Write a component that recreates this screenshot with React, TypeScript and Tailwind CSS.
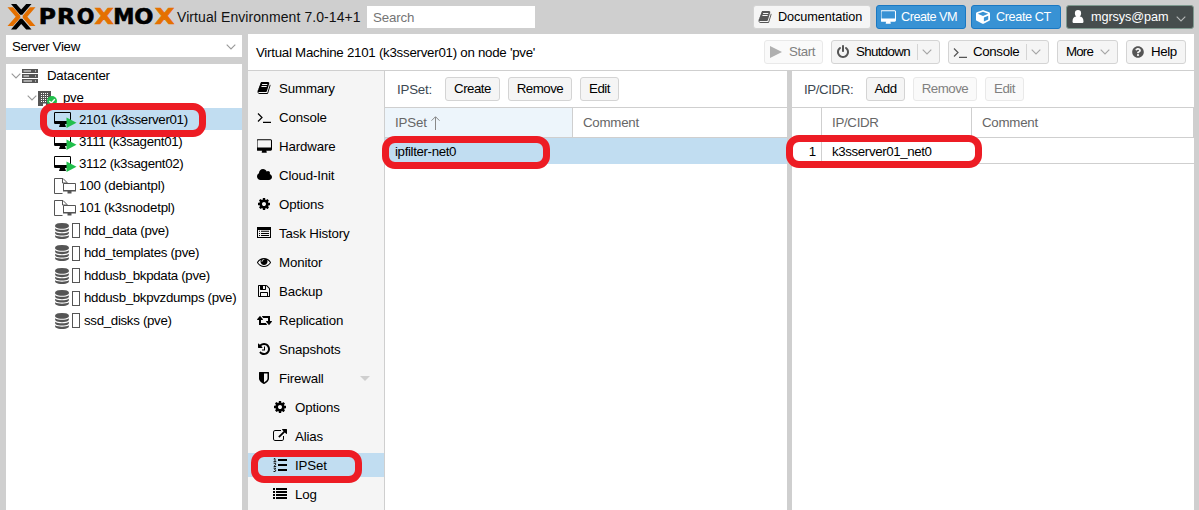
import React from "react";
import { FaCube, FaQuestionCircle } from "react-icons/fa";

const P = {
  book: "M1703 478q40 57 18 129l-275 906q-19 64-76.5 107.5t-122.5 43.5h-923q-77 0-148.5-53.5t-99.5-131.5q-24-67-2-127 0-4 3-27t4-37q1-8-3-21.5t-3-19.5q2-11 8-21t16.5-23.5 16.5-23.5q23-38 45-91.5t30-91.5q3-10 .5-30t-.5-28q3-11 17-28t17-23q21-36 42-92t25-90q1-9-2.5-32t.5-28q4-13 22-30.5t22-22.5q19-26 42.5-84.5t27.5-96.5q1-8-3-25.5t-2-26.5q2-8 9-18t18-23 17-21q8-12 16.5-30.5t15-35 16-36 19.5-32 26.5-23.5 36-11.5 47.5 5.5l-1 3q38-9 51-9h761q74 0 114 56t18 130l-274 906q-36 119-71.5 153.5t-128.5 34.5h-869q-27 0-38 15-11 16-1 43 24 70 144 70h923q29 0 56-15.5t35-41.5l300-987q7-22 5-57 38 15 59 43zm-1064 2q-4 13 2 22.5t20 9.5h608q13 0 25.5-9.5t16.5-22.5l21-64q4-13-2-22.5t-20-9.5h-608q-13 0-25.5 9.5t-16.5 22.5zm-83 256q-4 13 2 22.5t20 9.5h608q13 0 25.5-9.5t16.5-22.5l21-64q4-13-2-22.5t-20-9.5h-608q-13 0-25.5 9.5t-16.5 22.5z",
  desktop: "M1728 992v-832q0-13-9.5-22.5t-22.5-9.5h-1600q-13 0-22.5 9.5t-9.5 22.5v832q0 13 9.5 22.5t22.5 9.5h1600q13 0 22.5-9.5t9.5-22.5zm128-832v1088q0 66-47 113t-113 47h-544q0 37 16 77.5t32 71 16 43.5q0 26-19 45t-45 19h-512q-26 0-45-19t-19-45q0-14 16-44t32-70 16-78h-544q-66 0-113-47t-47-113v-1088q0-66 47-113t113-47h1600q66 0 113 47t47 113z",
  cloud: "M1920 1152q0 159-112.5 271.5t-271.5 112.5h-1088q-185 0-316.5-131.5t-131.5-316.5q0-132 71-241.5t187-163.5q-2-28-2-43 0-212 150-362t362-150q158 0 286.5 88t187.5 230q70-62 166-62 106 0 181 75t75 181q0 75-41 138 129 30 213 134.5t84 239.5z",
  cog: "M1152 896q0-106-75-181t-181-75-181 75-75 181 75 181 181 75 181-75 75-181zm512-109v222q0 12-8 23t-20 13l-185 28q-19 54-39 91 35 50 107 138 10 12 10 25t-9 23q-27 37-99 108t-94 71q-12 0-26-9l-138-108q-44 23-91 38-16 136-29 186-7 28-36 28h-222q-14 0-24.5-8.5t-11.5-21.5l-28-184q-49-16-90-37l-141 107q-10 9-25 9-14 0-25-11-126-114-165-168-7-10-7-23 0-12 8-23 15-21 51-66.5t54-70.5q-27-50-41-99l-183-27q-13-2-21-12.5t-8-23.5v-222q0-12 8-23t19-13l186-28q14-46 39-92-40-57-107-138-10-12-10-24 0-10 9-23 26-36 98.5-107.5t94.5-71.5q13 0 26 10l138 107q44-23 91-38 16-136 29-186 7-28 36-28h222q14 0 24.5 8.5t11.5 21.5l28 184q49 16 90 37l142-107q9-9 24-9 13 0 25 10 129 119 165 170 7 8 7 22 0 12-8 23-15 21-51 66.5t-54 70.5q26 50 41 98l183 28q13 2 21 12.5t8 23.5z",
  listAlt: "M0 128h1792v1408h-1792zM128 512v896h1536v-896zM256 600h128v128h-128zM512 600h1024v128h-1024zM256 880h128v128h-128zM512 880h1024v128h-1024zM256 1160h128v128h-128zM512 1160h1024v128h-1024z",
  eye: "M1664 960q-152-236-381-353 61 104 61 225 0 185-131.5 316.5t-316.5 131.5-316.5-131.5-131.5-316.5q0-121 61-225-229 117-381 353 133 205 333.5 326.5t434.5 121.5 434.5-121.5 333.5-326.5zm-720-384q0-20-14-34t-34-14q-125 0-214.5 89.5t-89.5 214.5q0 20 14 34t34 14 34-14 14-34q0-86 61-147t147-61q20 0 34-14t14-34zm848 384q0 34-20 69-140 230-376.5 368.5t-499.5 138.5-499.5-139-376.5-368q-20-35-20-69t20-69q140-229 376.5-368t499.5-139 499.5 139 376.5 368q20 35 20 69z",
  floppy: "M512 1536h768v-384h-768v384zm896 0h128v-896q0-14-10-38.5t-20-34.5l-281-281q-10-10-34-20t-39-10v416q0 40-28 68t-68 28h-576q-40 0-68-28t-28-68v-416h-128v1280h128v-416q0-40 28-68t68-28h832q40 0 68 28t28 68v416zm-384-928v-320q0-13-9.5-22.5t-22.5-9.5h-192q-13 0-22.5 9.5t-9.5 22.5v320q0 13 9.5 22.5t22.5 9.5h192q13 0 22.5-9.5t9.5-22.5zm640 32v928q0 40-28 68t-68 28h-1344q-40 0-68-28t-28-68v-1344q0-40 28-68t68-28h928q40 0 88 20t76 48l280 280q28 28 48 76t20 88z",
  retweet: "M1344 1504q0 13-9.5 22.5t-22.5 9.5h-960q-8 0-13.5-2t-9-7-5.5-8-3-11.5-1-11.5v-600h-192q-26 0-45-19t-19-45q0-24 15-41l320-384q19-22 49-22t49 22l320 384q15 17 15 41 0 26-19 45t-45 19h-192v384h576q16 0 25 11l160 192q7 10 7 21zm640-416q0 24-15 41l-320 384q-20 23-49 23t-49-23l-320-384q-15-17-15-41 0-26 19-45t45-19h192v-384h-576q-16 0-25-12l-160-192q-7-9-7-20 0-13 9.5-22.5t22.5-9.5h960q8 0 13.5 2t9 7 5.5 8 3 11.5 1 11.5v600h192q26 0 45 19t19 45z",
  history: "M1664 896q0 156-61 298t-164 245-245 164-298 61q-172 0-327-72.5t-264-204.5q-7-10-6.5-22.5t8.5-20.5l137-138q10-9 25-9 16 2 23 12 73 95 179 147t225 52q104 0 198.5-40.5t163.5-109.5 109.5-163.5 40.5-198.5-40.5-198.5-109.5-163.5-163.5-109.5-198.5-40.5q-98 0-188 35.5t-160 101.5l137 138q31 30 14 69-17 40-59 40h-448q-26 0-45-19t-19-45v-448q0-42 40-59 39-17 69 14l130 129q107-101 244.5-156.5t284.5-55.5q156 0 298 61t245 164 164 245 61 298zm-640-288v448q0 14-9 23t-23 9h-320q-14 0-23-9t-9-23v-64q0-14 9-23t23-9h224v-352q0-14 9-23t23-9h64q14 0 23 9t9 23z",
  shield: "M1344 960v-640h-448v1137q119-63 213-137 235-184 235-360zm192-768v768q0 86-33.5 170.5t-83 150-118 127.5-126.5 103-121 77.5-89.5 49.5-42.5 20q-12 6-26 6t-26-6q-16-7-42.5-20t-89.5-49.5-121-77.5-126.5-103-118-127.5-83-150-33.5-170.5v-768q0-26 19-45t45-19h1152q26 0 45 19t19 45z",
  external: "M1408 928v320q0 119-84.5 203.5t-203.5 84.5h-832q-119 0-203.5-84.5t-84.5-203.5v-832q0-119 84.5-203.5t203.5-84.5h704q14 0 23 9t9 23v64q0 14-9 23t-23 9h-704q-66 0-113 47t-47 113v832q0 66 47 113t113 47h832q66 0 113-47t47-113v-320q0-14 9-23t23-9h64q14 0 23 9t9 23zm384-864v512q0 26-19 45t-45 19-45-19l-176-176-652 652q-10 10-23 10t-23-10l-114-114q-10-10-10-23t10-23l652-652-176-176q-19-19-19-45t19-45 45-19h512q26 0 45 19t19 45z",
  database: "M896 768q237 0 443-43t325-127v170q0 69-103 128t-280 93.5-385 34.5-385-34.5-280-93.5-103-128v-170q119 84 325 127t443 43zm0 768q237 0 443-43t325-127v170q0 69-103 128t-280 93.5-385 34.5-385-34.5-280-93.5-103-128v-170q119 84 325 127t443 43zm0-384q237 0 443-43t325-127v170q0 69-103 128t-280 93.5-385 34.5-385-34.5-280-93.5-103-128v-170q119 84 325 127t443 43zm0-1152q208 0 385 34.5t280 93.5 103 128v128q0 69-103 128t-280 93.5-385 34.5-385-34.5-280-93.5-103-128v-128q0-69 103-128t280-93.5 385-34.5z",
  power: "M1664 896q0 156-61 298t-164 245-245 164-298 61-298-61-245-164-164-245-61-298q0-182 80.5-343t226.5-270q43-32 95.5-25t83.5 50q32 42 24.5 94.5t-49.5 84.5q-98 74-151.5 181t-53.5 228q0 104 40.5 198.5t109.5 163.5 163.5 109.5 198.5 40.5 198.5-40.5 163.5-109.5 109.5-163.5 40.5-198.5q0-121-53.5-228t-151.5-181q-42-32-49.5-84.5t24.5-94.5q31-43 84-50t95 25q146 109 226.5 270t80.5 343zm-640-768v640q0 52-38 90t-90 38-90-38-38-90v-640q0-52 38-90t90-38 90 38 38 90z",
  list: "M0 128h256v256h-256zM384 128h1408v256h-1408zM0 512h256v256h-256zM384 512h1408v256h-1408zM0 896h256v256h-256zM384 896h1408v256h-1408zM0 1280h256v256h-256zM384 1280h1408v256h-1408z",
  user: "M896 0a400 400 0 0 1 400 400c0 170-70 330-190 420c300 0 494 200 494 640c0 130-90 204-200 204h-1008c-110 0-200-74-200-204c0-440 194-640 494-640c-120-90-190-250-190-420a400 400 0 0 1 400-400z",
};

function Icon({ d, box = "0 0 1792 1792", className = "size-[14px]" }: { d: string; box?: string; className?: string }) {
  return (
    <svg viewBox={box} className={`shrink-0 ${className}`} fill="currentColor" fillRule="evenodd">
      <path d={d} />
    </svg>
  );
}

const Terminal = () => (
  <svg viewBox="0 0 14 12" className="mt-px h-3 w-3.5 shrink-0" fill="none" stroke="currentColor" strokeWidth="1.2">
    <path d="M1 1.5L5 5.5L1 9.5M6 10.4H14" />
  </svg>
);

const NumList = () => (
  <svg viewBox="0 0 14 14" className="size-[14px] shrink-0" fill="none" stroke="currentColor">
    <path d="M5 2H14M5 7H14M5 12H14" strokeWidth="2" />
    <path d="M.7 1L2 .5V3.6M.5 3.7H3.3M.7 5.3H2.6V6.8L.8 8.5H3.2M.6 10.2H2.7L1.6 11.5L2.8 12.2L2.2 13.5H.5" strokeWidth=".9" />
  </svg>
);

const Chevron = ({ className = "text-[#a5a5a5]" }: { className?: string }) => (
  <svg viewBox="0 0 10 6" className={`h-1.5 w-2.5 shrink-0 ${className}`} fill="none" stroke="currentColor" strokeWidth="1.1">
    <path d="M.7 .7L5 5L9.3 .7" />
  </svg>
);

const Logo = () => (
  <svg viewBox="0 0 170 28" className="h-7 w-[170px] shrink-0" fontFamily="DejaVu Sans" fontWeight="bold" fontSize="20.6">
    <path d="M4 1H9.300L14.200 6.600L19.200 1H24.500L15.300 11.800H13.100zM4 26.500H9.300L14.200 20.900L19.200 26.500H24.500L15.300 15.700H13.100z" />
    <path fill="#e57000" d="M.2 4.300H5.800L13 12.700V14.700L5.800 23H.2L8.400 13.700zM28.200 4.300H22.600L15.400 12.700V14.700L22.600 23H28.200L20 13.700z" transform="translate(.3 0)" />
    <g stroke="#000" strokeWidth=".6">
      <text x="31.700" y="21.200" textLength="17" lengthAdjust="spacingAndGlyphs">P</text>
      <text x="50" y="21.200" textLength="18" lengthAdjust="spacingAndGlyphs">R</text>
      <text x="69.700" y="21.200" textLength="17.500" lengthAdjust="spacingAndGlyphs">O</text>
      <text x="106.300" y="21.200" textLength="21" lengthAdjust="spacingAndGlyphs">M</text>
      <text x="127.300" y="21.200" textLength="19" lengthAdjust="spacingAndGlyphs">O</text>
    </g>
    <g fill="#e57000" stroke="#e57000" strokeWidth=".6">
      <text x="87.500" y="21.200" textLength="19" lengthAdjust="spacingAndGlyphs">X</text>
      <text x="147.700" y="21.200" textLength="19.500" lengthAdjust="spacingAndGlyphs">X</text>
    </g>
  </svg>
);

const ServerIcon = () => (
  <svg viewBox="0 0 16 14" className="h-3.5 w-4 shrink-0">
    <path fill="#555" d="M0 0h16v4H0zM0 5h16v4H0zM0 10h16v4H0z" />
    <path stroke="#fff" d="M1.500 2H9M1.500 7H7M1.500 12H10M13 2h1M13 7h1M13 12h1" />
  </svg>
);

const NodeIcon = () => (
  <svg viewBox="0 0 19 15" className="h-[15px] w-[19px] shrink-0">
    <path fill="#555" d="M0 0h13v15H0z" />
    <path stroke="#fff" strokeDasharray="1 1" d="M3 2.500h8M3 4.500h8M3 6.500h8M3 8.500h8M3 10.500h8" />
    <path fill="#fff" d="M5 12.500h3V15H5z" />
    <circle cx="14" cy="10" r="5" fill="#21bf4b" />
    <path d="M11.300 10l2 2 3.500-3.800" fill="none" stroke="#fff" strokeWidth="1.4" />
  </svg>
);

const VmIcon = () => (
  <svg viewBox="0 0 23 16" className="h-4 w-[23px] shrink-0">
    <path fillRule="evenodd" d="M1.200 0h14.600Q17 0 17 1.200v9.600Q17 12 15.800 12H11l1 3H5l1-3H1.200Q0 12 0 10.800V1.200Q0 0 1.200 0zM1 1v8h15V1z" />
    <path d="M12.500 5.500L22.500 10.700L12.500 16z" fill="#21bf4b" />
  </svg>
);

const TemplateIcon = () => (
  <svg viewBox="0 0 23 16" className="h-4 w-[23px] shrink-0" fill="none" stroke="#555">
    <path d="M13 5V4.500L9 .5H.5V15.500H8.500M8.500 .5V5H13" />
    <path d="M9.500 5.500H21.500V12.500H9.500z" fill="#fff" />
    <path d="M9 12h13v1.500H9zM13.500 13.500h4v2h-4z" fill="#555" stroke="none" />
  </svg>
);

const StorageIcon = () => (
  <span className="mr-1 flex items-center gap-[3px] text-[#555]">
    <Icon d={P.database} box="128 0 1536 1792" className="h-4 w-3.5" />
    <span className="h-[15px] w-2 border border-[#555]" />
  </span>
);

const btn = "flex h-6 shrink-0 items-center rounded-[3px] border ";
const normal = "border-[#d4d4d4] bg-[#f5f5f5] text-black ";
const disabled = "border-[#e9e9e9] bg-[#fafafa] text-[#808080] ";

const vms = ["2101 (k3sserver01)", "3111 (k3sagent01)", "3112 (k3sagent02)"];
const templates = ["100 (debiantpl)", "101 (k3snodetpl)"];
const storages = ["hdd_data (pve)", "hdd_templates (pve)", "hddusb_bkpdata (pve)", "hddusb_bkpvzdumps (pve)", "ssd_disks (pve)"];

const menu: { label: string; icon: React.ReactNode; sub?: boolean }[] = [
  { label: "Summary", icon: <Icon d={P.book} /> },
  { label: "Console", icon: <Terminal /> },
  { label: "Hardware", icon: <Icon d={P.desktop} box="0 0 1856 1664" className="h-[14px] w-[15px]" /> },
  { label: "Cloud-Init", icon: <Icon d={P.cloud} box="0 0 1920 1792" className="h-[14px] w-[15px]" /> },
  { label: "Options", icon: <Icon d={P.cog} /> },
  { label: "Task History", icon: <Icon d={P.listAlt} /> },
  { label: "Monitor", icon: <Icon d={P.eye} /> },
  { label: "Backup", icon: <Icon d={P.floppy} /> },
  { label: "Replication", icon: <Icon d={P.retweet} box="64 0 1920 1792" className="h-[14px] w-[15px]" /> },
  { label: "Snapshots", icon: <Icon d={P.history} /> },
  { label: "Firewall", icon: <Icon d={P.shield} /> },
  { label: "Options", icon: <Icon d={P.cog} />, sub: true },
  { label: "Alias", icon: <Icon d={P.external} />, sub: true },
  { label: "IPSet", icon: <NumList />, sub: true },
  { label: "Log", icon: <Icon d={P.list} />, sub: true },
];

export default function App() {
  return (
    <div className="relative flex h-[510px] w-[1199px] flex-col overflow-hidden bg-[#cfcfcf] font-['Liberation_Sans',Arial,sans-serif] text-[13.3px] leading-4 tracking-[-0.15px] whitespace-nowrap text-black">
      <header className="flex h-[34px] shrink-0 items-center pr-[5px] pl-[7px]">
        <Logo />
        <span className="w-[190px] text-[14px] tracking-[0.08px] text-[#111]">Virtual Environment 7.0-14+1</span>
        <div className="flex h-[22px] w-[168px] items-center bg-white pt-0.5 pl-1.5 text-[#757575]">Search</div>
        <div className="ml-auto flex gap-[5px] text-[12.7px]">
          <button className={btn + normal + "w-[118px] pl-1"}>
            <span className="mr-[6px] text-[#555]"><Icon d={P.book} /></span>
            <span className="tracking-[-0.08px]">Documentation</span>
          </button>
          <button className={btn + "w-[90px] border-[#1a78c2] bg-[#3892d4] pl-1 text-white"}>
            <Icon d={P.desktop} box="0 0 1856 1664" className="mr-[5px] h-[14px] w-[15px]" />
            <span className="tracking-[-0.5px]">Create VM</span>
          </button>
          <button className={btn + "w-[90px] border-[#1a78c2] bg-[#3892d4] pl-1 text-white"}>
            <FaCube className="mr-[6px] size-[14px]" />
            <span className="tracking-[-0.4px]">Create CT</span>
          </button>
          <button className={btn + "w-[128px] border-[#7f9a90] bg-[#464d4d] pl-1 text-white"}>
            <Icon d={P.user} className="mr-1.5 size-[14px]" />
            <span className="w-[85px] text-left tracking-[-0.1px]">mgrsys@pam</span>
            <Chevron className="mt-1 text-[#b5b8b8]" />
          </button>
        </div>
      </header>

      <div className="flex min-h-0 flex-1 gap-1.5 pr-[5px] pl-1.5">
        <aside className="flex w-[236px] shrink-0 flex-col gap-[7px] pt-px tracking-[-0.32px]">
          <div className="flex h-[22px] shrink-0 items-center justify-between bg-white pt-px pr-1.5 pl-1.5">
            Server View
            <Chevron className="text-[#999]" />
          </div>
          <div className="flex-1 bg-white">
            <div className="flex h-[22px] items-center pt-0.5 pl-[5px]">
              <Chevron className="mr-px text-[#999]" /><ServerIcon /><span className="ml-[9px] tracking-[-0.23px]">Datacenter</span>
            </div>
            <div className="flex h-[22px] items-center pt-0.5 pl-[21px]">
              <Chevron className="mr-px text-[#999]" /><NodeIcon /><span className="ml-1.5">pve</span>
            </div>
            {vms.map((v, i) => (
              <div key={v} className={`flex h-[22px] items-center pt-0.5 pl-12 ${i === 0 ? "bg-[#c1ddf1]" : ""}`}>
                <VmIcon /><span className="ml-0.5">{v}</span>
              </div>
            ))}
            {templates.map((v) => (
              <div key={v} className="flex h-[22px] items-center pt-0.5 pl-12 tracking-[-0.2px]">
                <TemplateIcon /><span className="ml-0.5">{v}</span>
              </div>
            ))}
            {storages.map((v) => (
              <div key={v} className="flex h-[22.5px] items-center pt-[3px] pl-[49px]">
                <StorageIcon />{v}
              </div>
            ))}
          </div>
        </aside>

        <main className="flex min-w-0 flex-1 flex-col bg-white">
          <div className="flex h-[37px] shrink-0 items-center border-b border-[#cfcfcf] pr-2 pl-2">
            <span className="mr-auto pt-px tracking-[-0.26px]">Virtual Machine 2101 (k3sserver01) on node 'pve'</span>
            <button className={btn + disabled + "mr-2 w-[59px] pl-[5px]"}>
              <svg viewBox="0 0 12 12" className="mr-[7px] size-3" fill="#b0b0b0"><path d="M0 0L12 6L0 12z" /></svg>
              <span className="tracking-[-0.4px]">Start</span>
            </button>
            <button className={btn + normal + "mr-2 w-[109px] pl-1"}>
              <span className="mr-[6px] text-[#555]"><Icon d={P.power} /></span>
              <span className="w-[61px] text-left tracking-[-0.65px]">Shutdown</span>
              <span className="mr-1 h-4 w-px bg-[#d4d4d4]" /><Chevron />
            </button>
            <button className={btn + normal + "mr-2 w-[101px] pl-1"}>
              <span className="mr-[6px] text-[#555]"><Terminal /></span>
              <span className="w-[53px] text-left tracking-[-0.35px]">Console</span>
              <span className="mr-1 h-4 w-px bg-[#d4d4d4]" /><Chevron />
            </button>
            <button className={btn + normal + "mr-2 w-[61px] pl-2"}>
              <span className="w-[34px] text-left tracking-[-0.8px]">More</span><Chevron />
            </button>
            <button className={btn + normal + "w-[60px] pl-[5px]"}>
              <FaQuestionCircle className="mr-[7px] size-3 text-[#555]" />
              <span className="tracking-[-0.4px]">Help</span>
            </button>
          </div>

          <div className="flex min-h-0 flex-1">
            <nav className="flex w-[137px] shrink-0 flex-col gap-[5px] overflow-hidden border-r border-[#cfcfcf] bg-[#f5f5f5] pt-[5px]">
              {menu.map((m, i) => (
                <div key={i} className={`flex h-6 shrink-0 items-center ${m.sub ? "pl-6" : "pl-2"} ${m.label === "IPSet" ? "bg-[#c1ddf1]" : ""}`}>
                  <span className="mr-[7px] flex w-4 justify-center">{m.icon}</span>
                  <span className="pt-0.5">{m.label}</span>
                  {m.label === "Firewall" && (
                    <svg viewBox="0 0 10 5" className="mr-3.5 ml-auto h-[5px] w-2.5" fill="#cfcfcf"><path d="M0 0H10L5 5z" /></svg>
                  )}
                </div>
              ))}
            </nav>

            <section className="flex w-[402px] shrink-0 flex-col">
              <div className="flex h-9 shrink-0 items-center gap-2 pl-3 tracking-[-0.5px]">
                <span className="w-10 pt-px tracking-[-0.2px] text-[#3c4852]">IPSet:</span>
                <button className={btn + normal + "w-[55px] justify-center"}>Create</button>
                <button className={btn + normal + "w-16 justify-center"}>Remove</button>
                <button className={btn + normal + "w-[39px] justify-center"}>Edit</button>
              </div>
              <div className="flex h-[31px] shrink-0 border-y border-[#cfcfcf] text-[#666]">
                <div className="flex w-[188px] items-center border-r border-[#cfcfcf] bg-[#edf5fb] pl-2.5">
                  IPSet
                  <svg viewBox="0 0 9 14" className="ml-1 h-3.5 w-[9px]" fill="none" stroke="#888"><path d="M4.500 14V1M.5 4.700L4.500 .7L8.500 4.700" /></svg>
                </div>
                <div className="flex items-center pl-2.5 tracking-[-0.25px]">Comment</div>
              </div>
              <div className="flex h-[26px] shrink-0 items-center bg-[#c1ddf1] pt-0.5 pl-2.5 tracking-[-0.36px]">ipfilter-net0</div>
            </section>

            <div className="w-[5px] shrink-0 bg-[#cfcfcf]" />

            <section className="flex min-w-0 flex-1 flex-col">
              <div className="flex h-9 shrink-0 items-center gap-2 pl-3 tracking-[-0.5px]">
                <span className="w-[54px] pt-px tracking-[-0.4px] text-[#3c4852]">IP/CIDR:</span>
                <button className={btn + normal + "w-[39px] justify-center"}>Add</button>
                <button className={btn + disabled + "w-16 justify-center"}>Remove</button>
                <button className={btn + disabled + "w-[39px] justify-center"}>Edit</button>
              </div>
              <div className="flex h-[31px] shrink-0 border-y border-[#cfcfcf] text-[#666]">
                <div className="w-[30px] border-r border-[#cfcfcf]" />
                <div className="flex w-[150px] items-center border-r border-[#cfcfcf] pl-2.5 tracking-[-0.3px]">IP/CIDR</div>
                <div className="flex flex-1 items-center border-r border-[#cfcfcf] pl-2.5 tracking-[-0.25px]">Comment</div>
              </div>
              <div className="flex h-[26px] shrink-0 border-b border-[#cfcfcf]">
                <div className="flex w-[30px] items-center justify-end border-r border-[#cfcfcf] pt-0.5 pr-[5px]">1</div>
                <div className="flex items-center pt-0.5 pl-2.5 tracking-[-0.38px]">k3sserver01_net0</div>
              </div>
            </section>
          </div>
        </main>
      </div>

      <div className="absolute top-[103px] left-[40px] h-[34px] w-[166px] rounded-[13px] border-[7px] border-[#ed1c24]" />
      <div className="absolute top-[136px] left-[382px] h-[33px] w-[168px] rounded-[13px] border-[7px] border-[#ed1c24]" />
      <div className="absolute top-[135px] left-[786px] h-[33px] w-[196px] rounded-[13px] border-[7px] border-[#ed1c24]" />
      <div className="absolute top-[450px] left-[251px] h-[33px] w-[111px] rounded-[13px] border-[7px] border-[#ed1c24]" />
    </div>
  );
}
